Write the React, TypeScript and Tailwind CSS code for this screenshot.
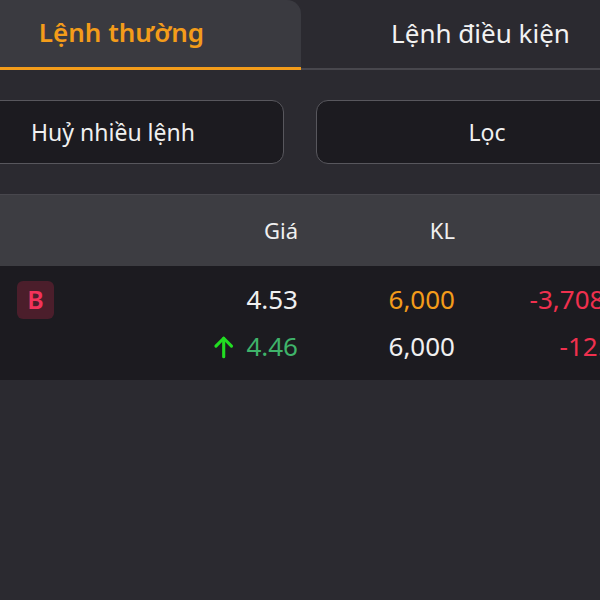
import React from "react";

const font = { fontFamily: '"Noto Sans", "Open Sans", sans-serif' };

function ArrowUpIcon() {
  return (
    <svg width="22" height="24" viewBox="0 0 22 24" fill="none" stroke="#22dd22" strokeWidth="3.2" strokeLinecap="round" strokeLinejoin="round">
      <path d="M11 22V3" />
      <path d="M3 11L11 3L19 11" />
    </svg>
  );
}

export default function App() {
  return (
    <div className="w-[600px] h-[600px] overflow-hidden bg-[#2b2a30]" style={font}>
      <div className="w-[718px] -ml-[58px] flex flex-col">
        {/* Tabs */}
        <div className="flex h-[70px]">
          <div className="flex-1 bg-[#3a3a40] rounded-tr-[14px] border-b-[3px] border-[#f39c1a] flex items-center justify-center pb-[2px]">
            <span className="text-[26px] font-semibold text-[#f39c1a]">Lệnh thường</span>
          </div>
          <div className="flex-1 border-b-[2px] border-[#48474d] flex items-center justify-center pb-[2px]">
            <span className="text-[26px] text-[#f2f2f2]">Lệnh điều kiện</span>
          </div>
        </div>
        {/* Buttons */}
        <div className="grid grid-cols-2 gap-8 pt-[30px] pb-[30px] pr-[2px]">
          <div className="h-[64px] rounded-[12px] border border-[#58575d] bg-[#1c1b20] flex items-center justify-center">
            <span className="text-[23px] text-[#f0f0f0]">Huỷ nhiều lệnh</span>
          </div>
          <div className="h-[64px] rounded-[12px] border border-[#58575d] bg-[#1c1b20] flex items-center justify-center">
            <span className="text-[23px] text-[#f0f0f0]">Lọc</span>
          </div>
        </div>
        {/* Header */}
        <div className="h-[72px] bg-[#3d3d42] border-t border-[#48474d] flex items-center text-[22px] text-[#f0f0f0]">
          <div className="w-[356px] text-right">Giá</div>
          <div className="w-[157px] text-right">KL</div>
        </div>
        {/* Rows */}
        <div className="bg-[#1c1b20] py-[10px] text-[26px]">
          <div className="h-[47px] flex items-center">
            <div className="w-[75px]" />
            <div className="w-[37px] h-[38px] rounded-[6px] bg-[#4b1e2b] flex items-center justify-center text-[#f2335a] text-[25px] font-semibold">B</div>
            <div className="w-[244px] text-right text-[#f0f0f0]">4.53</div>
            <div className="w-[157px] text-right text-[#f39c1a]">6,000</div>
            <div className="w-[201px] text-right text-[#f0304e]">-3,708,000</div>
          </div>
          <div className="h-[47px] flex items-center">
            <div className="w-[271px]" />
            <div className="w-[85px] flex items-center justify-end gap-[12px] text-[#3fb36a]">
              <ArrowUpIcon />
              <span>4.46</span>
            </div>
            <div className="w-[157px] text-right text-[#f0f0f0]">6,000</div>
            <div className="w-[201px] text-right text-[#f0304e]">-12.35%</div>
          </div>
        </div>
      </div>
    </div>
  );
}
